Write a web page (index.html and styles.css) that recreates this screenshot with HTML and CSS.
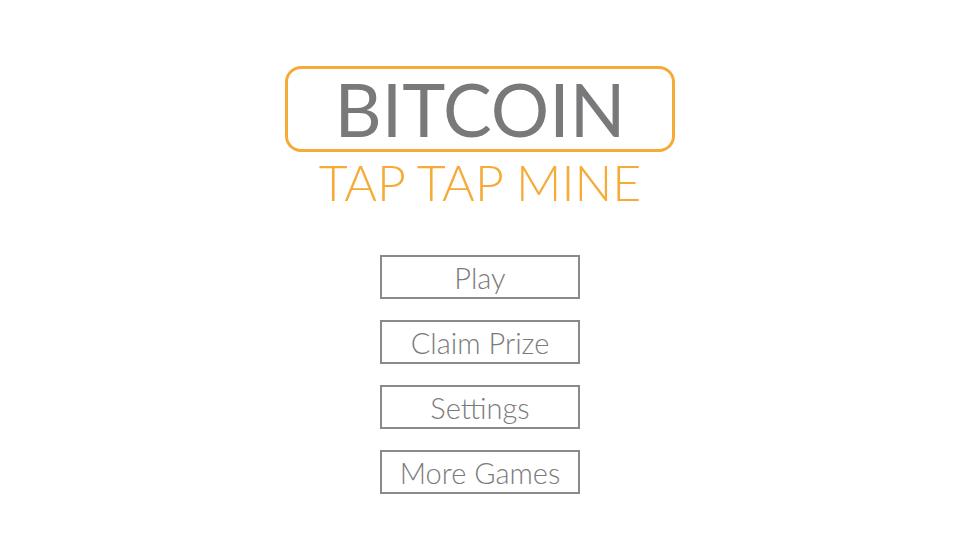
FILE: index.html
```html
<!DOCTYPE html>
<html lang="en">
<head>
    <meta charset="UTF-8">
    <meta name="viewport" content="width=device-width, initial-scale=1.0">
    <title>Bitcoin Tap Tap Mine</title>
    <link rel="stylesheet" href="styles.css">
</head>
<body>
    <div id="menu">
        <div class="logo">
            <div class="logo-box">BITCOIN</div>
            <div class="logo-sub">TAP TAP MINE</div>
        </div>

        <div class="buttons">
            <button class="menu-btn">Play</button>
            <button class="menu-btn">Claim Prize</button>
            <button class="menu-btn">Settings</button>
            <button class="menu-btn">More Games</button>
        </div>
    </div>
</body>
</html>
```

FILE: styles.css
```css
body {
    font-family: Lato, 'Open Sans', sans-serif;
    margin: 0;
    padding: 0;
    background-color: #fff;
    width: 960px;
    height: 540px;
    overflow: hidden;
}

#menu {
    display: flex;
    flex-direction: column;
    align-items: center;
    padding-top: 66px;
}

.logo {
    display: flex;
    flex-direction: column;
    align-items: center;
}

.logo-box {
    width: 384px;
    height: 80px;
    border: 3px solid #f6ab37;
    border-radius: 16px;
    color: #79797b;
    font-size: 73px;
    font-weight: 400;
    line-height: 80px;
    text-align: center;
}

.logo-sub {
    color: #f6ab37;
    font-size: 50px;
    font-weight: 300;
    line-height: 60px;
}

.buttons {
    display: flex;
    flex-direction: column;
    gap: 21px;
    margin-top: 43px;
}

.menu-btn {
    width: 200px;
    height: 44px;
    background-color: #fff;
    border: 2px solid #8a8a8a;
    color: #7b7b7b;
    font-family: Lato, sans-serif;
    font-size: 29px;
    font-weight: 300;
    padding: 0;
    cursor: pointer;
}
```
